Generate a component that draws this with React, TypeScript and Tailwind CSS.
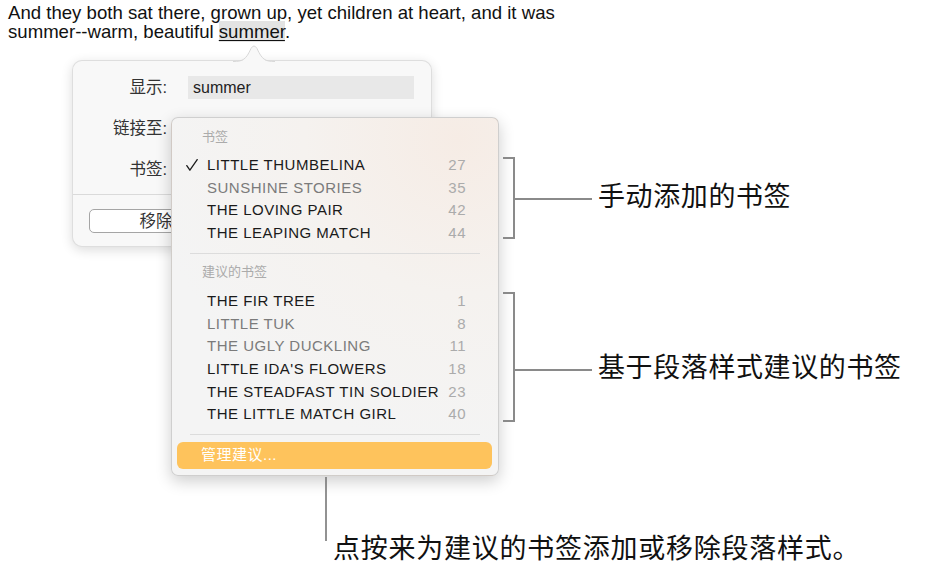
const FONT = "font-['Liberation_Sans','Noto_Sans_CJK_SC',sans-serif]";

type Item = { title: string; page: number; dim?: boolean; checked?: boolean };

const manual: Item[] = [
  { title: 'LITTLE THUMBELINA', page: 27, checked: true },
  { title: 'SUNSHINE STORIES', page: 35, dim: true },
  { title: 'THE LOVING PAIR', page: 42 },
  { title: 'THE LEAPING MATCH', page: 44 },
];

const suggested: Item[] = [
  { title: 'THE FIR TREE', page: 1 },
  { title: 'LITTLE TUK', page: 8, dim: true },
  { title: 'THE UGLY DUCKLING', page: 11, dim: true },
  { title: "LITTLE IDA'S FLOWERS", page: 18 },
  { title: 'THE STEADFAST TIN SOLDIER', page: 23 },
  { title: 'THE LITTLE MATCH GIRL', page: 40 },
];

function Check() {
  return (
    <svg width="12" height="12" viewBox="0 0 12 12" fill="none">
      <path d="M0.8 6.6 L3.9 11.2 L11.2 0.6" stroke="#1c1c1c" strokeWidth="1.3" strokeLinecap="round" strokeLinejoin="round" />
    </svg>
  );
}

function MenuRow({ item }: { item: Item }) {
  return (
    <div className="flex h-[22.7px] items-center pl-[14px] pr-[32px]">
      <span className="flex w-[21px] items-center">{item.checked && <Check />}</span>
      <span className={`flex-1 text-[15px] tracking-[0.5px] ${item.dim ? 'text-[#7b7b7b]' : 'text-[#1a1a1a]'}`}>
        {item.title}
      </span>
      <span className="text-[15px] tracking-[0.5px] text-[#ababab]">{item.page}</span>
    </div>
  );
}

function Divider() {
  return <div className="mx-[18px] h-px bg-[#dcdcdc]" />;
}

function BookmarkMenu() {
  return (
    <div className="absolute left-[171px] top-[117px] h-[359px] w-[328px] overflow-hidden rounded-[7px] border border-black/15 bg-[radial-gradient(circle_at_88%_6%,#f6ece5_0%,#f5f2ef_35%,#f4f4f4_70%)] shadow-[0_5px_16px_rgba(0,0,0,0.2)]">
      <div className="mt-[9px] flex h-[20px] items-center pl-[30px] text-[13px] text-[#ababab]">书签</div>
      <div className="pt-[7px]">
        {manual.map((it) => (
          <MenuRow key={it.title} item={it} />
        ))}
      </div>
      <div className="mt-[8px]">
        <Divider />
      </div>
      <div className="mt-[8px] flex h-[20px] items-center pl-[30px] text-[13px] text-[#ababab]">建议的书签</div>
      <div className="pt-[8px]">
        {suggested.map((it) => (
          <MenuRow key={it.title} item={it} />
        ))}
      </div>
      <div className="mt-[8px]">
        <Divider />
      </div>
      <div className="ml-[5px] mr-[6px] mt-[7px] flex h-[27px] items-center rounded-[6px] bg-[#fec35c] pl-[24px] text-[15px] tracking-[0.5px] text-white">
        管理建议...
      </div>
    </div>
  );
}

function FieldLabel({ children }: { children: React.ReactNode }) {
  return <span className="w-[94px] text-right text-[16.5px] text-[#333]">{children}</span>;
}

function LinkPopover() {
  return (
    <div className="absolute left-[72px] top-[60px] w-[360px] rounded-[10px] border border-black/10 bg-[#f8f8f8] shadow-[0_3px_12px_rgba(0,0,0,0.14)]">
      <svg className="absolute left-[160px] top-[-16px]" width="42" height="18" viewBox="0 0 42 18">
        <path d="M0 17 C10 17 13 15 18 4 Q21 -1 24 4 C29 15 32 17 42 17 Z" fill="#f8f8f8" />
        <path d="M0 16.5 C10 16.5 13 14.5 18 3.5 Q21 -1.5 24 3.5 C29 14.5 32 16.5 42 16.5" fill="none" stroke="#d8d8d8" strokeWidth="1" />
      </svg>
      <div className="flex flex-col gap-[18px] pt-[15px]">
        <div className="flex h-[23px] items-center">
          <FieldLabel>显示:</FieldLabel>
          <div className="ml-[21px] flex h-[23px] w-[226px] items-center bg-[#e8e8e8] pl-[5px] text-[16px] text-[#222]">
            summer
          </div>
        </div>
        <div className="flex h-[23px] items-center">
          <FieldLabel>链接至:</FieldLabel>
          <div className="relative ml-[21px] h-[23px] w-[226px] rounded-[4px] border-t border-[#d2d2d2] bg-[#e3e3e3]">
            <span className="absolute right-[3px] top-[1px] h-[20px] w-[19px] rounded-[4px] bg-[#f6a623]" />
          </div>
        </div>
        <div className="flex h-[23px] items-center">
          <FieldLabel>书签:</FieldLabel>
        </div>
      </div>
      <div className="mt-[13px] h-px bg-[#dadada]" />
      <div className="px-[16px] pb-[13px] pt-[14px]">
        <div className="flex h-[24px] w-[134px] items-center justify-center rounded-[5px] border border-[#a5a5a5] bg-white text-[16.5px] text-[#333]">
          移除
        </div>
      </div>
    </div>
  );
}

function Callouts() {
  return (
    <>
      <svg className="pointer-events-none absolute left-0 top-0" width="951" height="569" viewBox="0 0 951 569" fill="none">
        <g stroke="#8a8a8a" strokeWidth="2">
          <path d="M503 158 H514 V238 H503" />
          <path d="M514 199 H592" />
          <path d="M503 293 H514 V421 H503" />
          <path d="M514 370 H592" />
        </g>
        <path d="M326 477 V541" stroke="#777" strokeWidth="1.6" />
      </svg>
      <div className="absolute left-[598px] top-[182px] text-[27px] leading-[30px] tracking-[0.6px] text-[#111]">手动添加的书签</div>
      <div className="absolute left-[598px] top-[353px] text-[27px] leading-[30px] tracking-[0.6px] text-[#111]">基于段落样式建议的书签</div>
      <div className="absolute left-[333px] top-[534px] text-[27px] leading-[30px] tracking-[0.75px] text-[#111]">
        点按来为建议的书签添加或移除段落样式。
      </div>
    </>
  );
}

export default function App() {
  return (
    <div className={`relative h-[569px] w-[951px] overflow-hidden bg-white ${FONT}`}>
      <p className="px-[8px] pt-[3px] text-[18.6px] leading-[19px] text-[#111]">
        And they both sat there, grown up, yet children at heart, and it was
        <br />
        summer--warm, beautiful <span className="bg-[#e3e3e3] underline underline-offset-2">summer</span>.
      </p>
      <LinkPopover />
      <BookmarkMenu />
      <Callouts />
    </div>
  );
}
